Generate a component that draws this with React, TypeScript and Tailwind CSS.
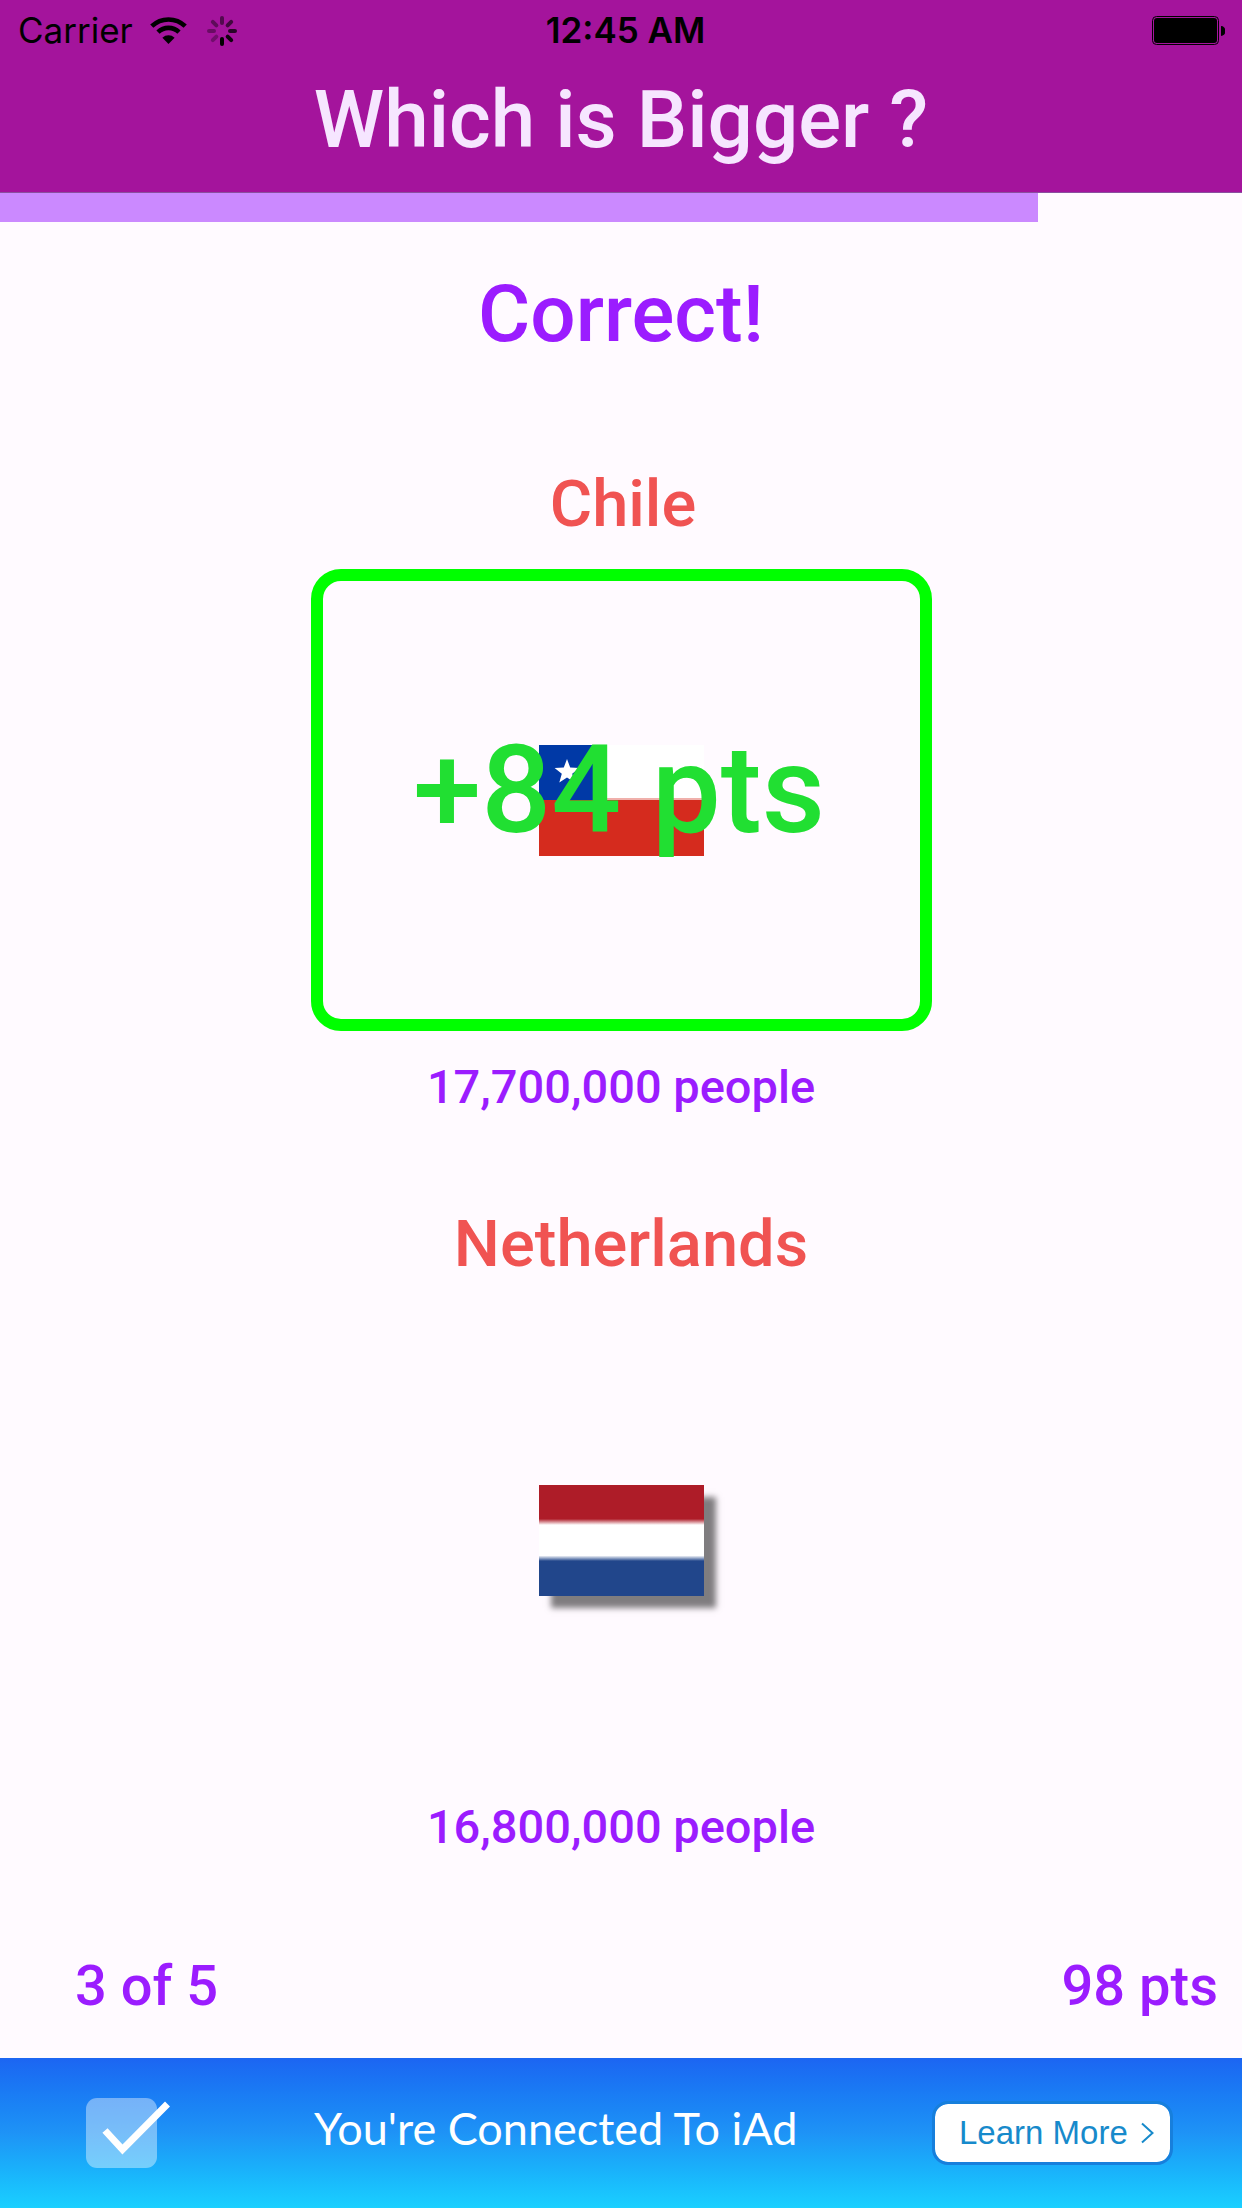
import type { ReactNode } from "react";

function WifiIcon() {
  return (
    <svg viewBox="0 0 37 28" className="h-7 w-[37px]" fill="none" stroke="#000" aria-hidden="true">
      <path d="M1.8 9.2a24 24 0 0 1 33.4 0" strokeWidth="4.6" />
      <path d="M8 15.2a15 15 0 0 1 21 0" strokeWidth="4.6" />
      <path d="M18.5 27 12.4 20.7a8.7 8.7 0 0 1 12.2 0Z" fill="#000" stroke="none" />
    </svg>
  );
}

const SPOKES = [
  { angle: 0, opacity: 0.5 },
  { angle: 45, opacity: 0.6 },
  { angle: 90, opacity: 0.75 },
  { angle: 135, opacity: 0.9 },
  { angle: 180, opacity: 1 },
  { angle: 225, opacity: 0.3 },
  { angle: 270, opacity: 0.36 },
  { angle: 315, opacity: 0.42 },
];

function Spinner() {
  return (
    <svg viewBox="0 0 30 30" className="size-[30px]" aria-hidden="true">
      {SPOKES.map((s) => (
        <rect
          key={s.angle}
          x="13"
          y="0"
          width="4"
          height="9"
          rx="2"
          fill="#000"
          opacity={s.opacity}
          transform={`rotate(${s.angle} 15 15)`}
        />
      ))}
    </svg>
  );
}

function BatteryIcon() {
  return (
    <svg viewBox="0 0 73 29" className="h-[29px] w-[73px]" aria-hidden="true">
      <rect x="0.5" y="0.5" width="66" height="28" rx="4" fill="none" stroke="#000" />
      <rect x="2" y="2" width="63" height="25" rx="3" fill="#000" />
      <path d="M69 10a4.5 5 0 0 1 0 10Z" fill="#000" />
    </svg>
  );
}

function ChileFlag() {
  return (
    <svg viewBox="0 0 165 111" className="h-[111px] w-[165px]" aria-hidden="true">
      <rect width="165" height="55" fill="#fff" />
      <rect width="55" height="55" fill="#0039a6" />
      <rect y="55" width="165" height="56" fill="#d52b1e" />
      <rect x="55" y="53" width="110" height="2" fill="#f0b0ab" />
      <path
        d="M28 14l3.200 8.600 9.200.4-7.200 5.700 2.500 8.800L28 32.400l-7.700 5.100 2.500-8.800-7.200-5.700 9.200-.4Z"
        fill="#fff"
      />
    </svg>
  );
}

function NetherlandsFlag() {
  return (
    <svg
      viewBox="0 0 165 111"
      className="h-[111px] w-[165px] shadow-[12px_12px_6px_rgba(0,0,0,0.5)]"
      aria-hidden="true"
    >
      <defs>
        <linearGradient id="nl" x1="0" y1="0" x2="0" y2="1">
          <stop offset="0.305" stopColor="#ae1c28" />
          <stop offset="0.36" stopColor="#fff" />
          <stop offset="0.635" stopColor="#fff" />
          <stop offset="0.685" stopColor="#21468b" />
        </linearGradient>
      </defs>
      <rect width="165" height="111" fill="url(#nl)" />
    </svg>
  );
}

function Answer(props: {
  name: string;
  people: string;
  flag: ReactNode;
  correct?: boolean;
  award?: string;
  nudge: string;
}) {
  return (
    <section className="flex w-full flex-col items-center">
      <h2 className={`text-[65px] leading-[80px] font-medium text-[#f05352] ${props.nudge}`}>
        {props.name}
      </h2>
      <button
        type="button"
        aria-label={props.name}
        className={`relative mt-[25px] flex h-[462px] w-1/2 items-center justify-center rounded-[30px] border-[12px] ${
          props.correct ? "border-[#00ff00]" : "border-transparent"
        }`}
      >
        {props.flag}
        {props.award && (
          <span className="absolute inset-0 flex items-center justify-center pr-1 pb-5 text-[123px] leading-none font-medium whitespace-nowrap text-[#21df32]">
            {props.award}
          </span>
        )}
      </button>
      <p className="mt-[26px] text-[47px] leading-[60px] font-medium text-[#9b1cff]">
        {props.people}
      </p>
    </section>
  );
}

export default function App() {
  return (
    <div className="flex min-h-screen flex-col bg-[#fffaff] font-['Roboto',sans-serif]">
      <header className="border-b border-[#8a4fa0] bg-[#a4149c]">
        <div className="grid h-[61px] grid-cols-3 items-center pr-[17px] pl-[18px] font-['Inter',sans-serif] text-[35px] text-black">
          <div className="flex items-center">
            <span>Carrier</span>
            <span className="ml-[17px]">
              <WifiIcon />
            </span>
            <span className="ml-5">
              <Spinner />
            </span>
          </div>
          <time className="pl-2 text-center font-semibold whitespace-nowrap">12:45 AM</time>
          <div className="flex justify-end">
            <BatteryIcon />
          </div>
        </div>
        <h1 className="h-[131px] text-center text-[80px] leading-[118px] font-medium text-[#f6e6ff]">
          Which is Bigger ?
        </h1>
      </header>

      <div
        role="progressbar"
        aria-label="Time left"
        aria-valuemin={0}
        aria-valuemax={1242}
        aria-valuenow={1038}
        className="h-[29px]"
      >
        <div className="h-full bg-[#cb89ff]" style={{ width: `${(1038 / 1242) * 100}%` }} />
      </div>

      <main className="flex flex-1 flex-col items-center pt-8">
        <p className="text-[80px] leading-[120px] font-medium text-[#9b1cff]">Correct!</p>
        <div className="mt-[90px] flex w-full flex-col gap-[87px]">
          <Answer
            name="Chile"
            people="17,700,000 people"
            flag={<ChileFlag />}
            correct
            award="+84 pts"
            nudge="pl-1"
          />
          <Answer
            name="Netherlands"
            people="16,800,000 people"
            flag={<NetherlandsFlag />}
            nudge="pl-5"
          />
        </div>
        <div className="mt-auto flex w-full justify-between pr-6 pb-8 pl-[75px] text-[56px] leading-[80px] font-medium text-[#9b1cff]">
          <span>3 of 5</span>
          <span>98 pts</span>
        </div>
      </main>

      <footer className="flex h-[150px] items-center bg-linear-to-b from-[#1c65f2] via-[#1e93f6] to-[#1bd0ff] pr-[69px] pl-[86px]">
        <svg viewBox="0 0 84 71" className="h-[71px] w-[84px]" fill="none" aria-hidden="true">
          <rect width="71" height="70" rx="11" fill="#fff" opacity="0.4" />
          <path d="M19 32.5 36.5 51.5 81.500 6" stroke="#fff" strokeWidth="7" />
        </svg>
        <p className="ml-[144px] pb-2 font-['Lato',sans-serif] text-[45px] whitespace-nowrap text-white">
          You're Connected To iAd
        </p>
        <button
          type="button"
          className="ml-auto flex h-16 w-[241px] items-center justify-between rounded-2xl border-[3px] border-[#177fdc] bg-white bg-clip-padding pr-4 pl-6 font-['Liberation_Sans',sans-serif] text-[33px] whitespace-nowrap text-[#178acb]"
        >
          Learn More
          <svg viewBox="0 0 13 22" className="h-[22px] w-[13px]" fill="none" aria-hidden="true">
            <path d="M1 1.500 11.500 11 1 20.500" stroke="#178acb" strokeWidth="2" />
          </svg>
        </button>
      </footer>
    </div>
  );
}
